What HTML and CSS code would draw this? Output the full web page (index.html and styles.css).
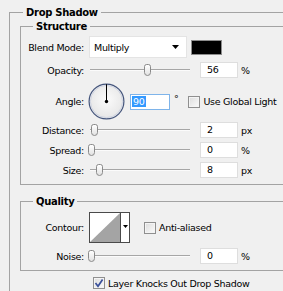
FILE: index.html
```html
<!DOCTYPE html>
<html>
<head>
<meta charset="utf-8">
<link rel="stylesheet" href="styles.css">
</head>
<body>
<div class="panel">
  <fieldset class="group outer">
    <legend>Drop Shadow</legend>
    <fieldset class="group inner structure">
      <legend>Structure</legend>
      <div class="row row-blend">
        <span class="label">Blend Mode:</span>
        <div class="select"><span class="select-text">Multiply</span><svg class="arrow" width="7" height="4" viewBox="0 0 7 4"><polygon points="0,0 7,0 3.5,4" fill="#000"/></svg></div>
        <div class="swatch"></div>
      </div>
      <div class="row row-opacity">
        <span class="label">Opacity:</span>
        <div class="slider"><div class="track"></div><div class="thumb" style="left:56px"></div></div>
        <div class="field">56</div><span class="unit">%</span>
      </div>
      <div class="row row-angle">
        <span class="label">Angle:</span>
        <svg class="dial" width="37" height="37" viewBox="0 0 37 37">
          <defs>
            <radialGradient id="dg" cx="50%" cy="45%" r="60%">
              <stop offset="0" stop-color="#fbfbfb"/>
              <stop offset="1" stop-color="#e4e4e4"/>
            </radialGradient>
          </defs>
          <circle cx="18.5" cy="18.5" r="17.4" fill="url(#dg)" stroke="#44557c" stroke-width="1.2"/>
          <circle cx="18.5" cy="18.5" r="16.1" fill="none" stroke="#cfd4e2" stroke-width="1"/>
          <line x1="18.5" y1="18.5" x2="18.5" y2="1.2" stroke="#000" stroke-width="1"/>
          <circle cx="18.5" cy="18.5" r="1.7" fill="#000"/>
        </svg>
        <div class="field field-focus"><span class="sel">90</span></div>
        <span class="deg">°</span>
        <span class="check"><span class="box"></span><span class="check-text">Use Global Light</span></span>
      </div>
      <div class="row row-distance">
        <span class="label">Distance:</span>
        <div class="slider"><div class="track"></div><div class="thumb" style="left:3px"></div></div>
        <div class="field">2</div><span class="unit">px</span>
      </div>
      <div class="row row-spread">
        <span class="label">Spread:</span>
        <div class="slider"><div class="track"></div><div class="thumb" style="left:0px"></div></div>
        <div class="field">0</div><span class="unit">%</span>
      </div>
      <div class="row row-size">
        <span class="label">Size:</span>
        <div class="slider"><div class="track"></div><div class="thumb" style="left:8px"></div></div>
        <div class="field">8</div><span class="unit">px</span>
      </div>
    </fieldset>
    <fieldset class="group inner quality">
      <legend>Quality</legend>
      <div class="row row-contour">
        <span class="label">Contour:</span>
        <div class="contour">
          <svg class="contour-preview" width="30" height="29" viewBox="0 0 30 29"><polygon points="0,29 30,0 30,29" fill="#a4a4a4"/></svg>
          <div class="contour-drop"><svg width="5" height="3" viewBox="0 0 5 3"><polygon points="0,0 5,0 2.5,3" fill="#000"/></svg></div>
        </div>
        <span class="check check-aa"><span class="box"></span><span class="check-text">Anti-aliased</span></span>
      </div>
      <div class="row row-noise">
        <span class="label">Noise:</span>
        <div class="slider"><div class="track"></div><div class="thumb" style="left:0px"></div></div>
        <div class="field">0</div><span class="unit">%</span>
      </div>
    </fieldset>
    <div class="row row-knock">
      <span class="check"><span class="box box-checked"><svg width="10" height="10" viewBox="0 0 10 10"><path d="M1.5 5 L4 8.2 L8.6 1.5" fill="none" stroke="#3a509a" stroke-width="1.7"/></svg></span><span class="check-text">Layer Knocks Out Drop Shadow</span></span>
    </div>
  </fieldset>
</div>
</body>
</html>
```
FILE: styles.css
```css
html, body {
  margin: 0;
  padding: 0;
}
body {
  background: #f0f0f0;
  font-family: "DejaVu Sans", sans-serif;
  font-size: 9.5px;
  letter-spacing: -0.3px;
  color: #000;
  width: 283px;
  height: 291px;
  overflow: hidden;
}
.panel {
  box-sizing: border-box;
  width: 283px;
  height: 291px;
  padding: 6px 0 0 9px;
  overflow: hidden;
}
fieldset.group {
  margin: 0;
  padding: 0;
  min-width: 0;
  border: 1px solid #a3a3a3;
  border-right: none;
}
fieldset.group > legend {
  font-weight: bold;
  font-size: 10px;
  line-height: 13px;
  padding: 0 3px;
}
fieldset.outer {
  padding: 1px 0 8px 10px;
  border-bottom: none;
}
fieldset.outer > legend {
  margin-left: 3px;
}
fieldset.inner > legend {
  margin-left: 12px;
}
fieldset.structure {
  padding: 3px 0 6px 0;
}
fieldset.quality {
  margin-top: 10px;
  padding: 4px 0 6px 0;
}
.row {
  display: flex;
  align-items: center;
}
.label {
  flex: none;
  width: 63px;
  margin-right: 5px;
  text-align: right;
}
.row-blend { height: 22px; }
.select {
  flex: none;
  box-sizing: border-box;
  width: 98px;
  height: 22px;
  background: #fff;
  border: 1px solid #e4e4e4;
  display: flex;
  align-items: center;
  padding: 0 4px 0 4px;
}
.select-text { flex: 1; }
.arrow { margin-right: 3px; }
.swatch {
  flex: none;
  box-sizing: border-box;
  width: 31px;
  height: 15px;
  margin-left: 4px;
  background: #000;
  border: 1px solid #8c8c8c;
}
.row-opacity { margin-top: 4px; height: 16px; }
.row-angle { margin-top: 5px; height: 37px; }
.row-distance { margin-top: 2px; height: 16px; }
.row-spread { margin-top: 4px; height: 16px; }
.row-size { margin-top: 4px; height: 16px; }
.row-contour { height: 31px; }
.row-noise { margin-top: 5px; height: 16px; }
.row-knock { margin-top: 6px; margin-left: 73px; height: 12px; }

.slider {
  flex: none;
  position: relative;
  width: 104px;
  height: 16px;
  margin-left: -1px;
  display: flex;
  align-items: center;
}
.track {
  flex: 1;
  margin: 0 2px 0 2px;
  height: 1px;
  background: #a6a6a6;
  border-bottom: 1px solid #fbfbfb;
}
.thumb {
  position: absolute;
  top: 2px;
  box-sizing: border-box;
  width: 7px;
  height: 12px;
  border: 1px solid #8a8a8a;
  border-radius: 3px 3px 4px 4px;
  background: linear-gradient(#ffffff, #e2e2e2);
}
.field {
  flex: none;
  box-sizing: border-box;
  width: 38px;
  height: 16px;
  margin-left: 8px;
  padding-left: 6px;
  background: #fff;
  border: 1px solid #dedede;
  line-height: 14px;
}
.unit { margin-left: 3px; }
.dial { flex: none; margin-left: -1px; }
.field-focus {
  width: 40px;
  margin-left: 5px;
  padding-left: 1px;
  border-color: #7eb4ea;
}
.sel {
  background: #3399ff;
  color: #fff;
  padding: 0 1px;
}
.deg {
  margin-left: 4px;
  align-self: flex-start;
  margin-top: 10px;
}
.check {
  display: flex;
  align-items: center;
  margin-left: 10px;
}
.box {
  flex: none;
  box-sizing: border-box;
  width: 12px;
  height: 12px;
  border: 1px solid #8f8f8f;
  background: linear-gradient(135deg, #dcdcdc, #fbfbfb);
  box-shadow: inset 0 0 0 1px #f4f4f4;
  display: flex;
  align-items: center;
  justify-content: center;
}
.check-text { margin-left: 3px; }
.row-knock .check { margin-left: 0; }
.check-aa { margin-left: 14px; }
.contour {
  flex: none;
  box-sizing: border-box;
  width: 41px;
  height: 31px;
  border: 1px solid #4a4a4a;
  background: #fff;
  display: flex;
}
.contour-preview { flex: none; }
.contour-drop {
  flex: 1;
  border-left: 1px solid #4a4a4a;
  display: flex;
  justify-content: center;
  padding-top: 12px;
  box-sizing: border-box;
}
```
